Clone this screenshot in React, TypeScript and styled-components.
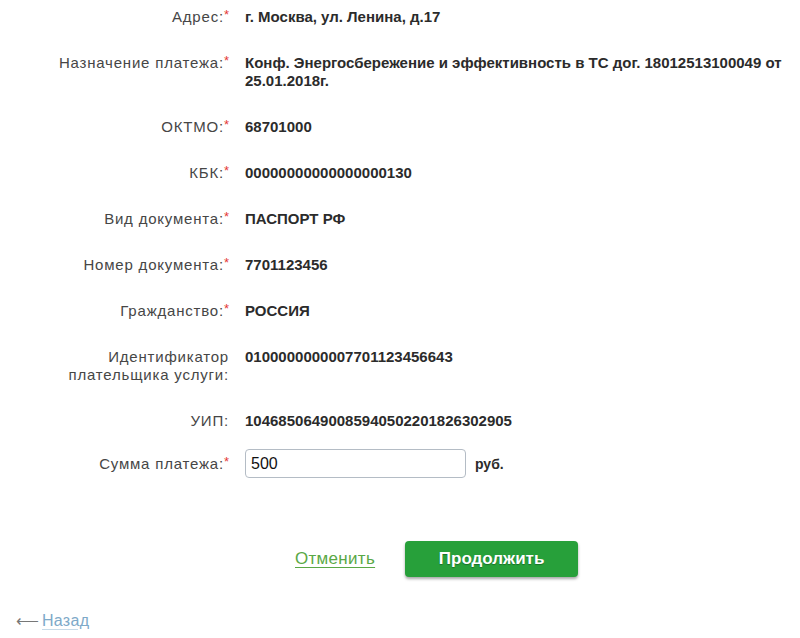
import styled, { createGlobalStyle } from "styled-components";

const GlobalStyle = createGlobalStyle`
  body {
    margin: 0;
    background: #ffffff;
    font-family: "Liberation Sans", Arial, sans-serif;
  }
`;

const Page = styled.div`
  width: 800px;
  height: 638px;
  padding-top: 8px;
  box-sizing: border-box;
`;

const Form = styled.div`
  display: flex;
  flex-direction: column;
`;

const Row = styled.div<{ $center?: boolean }>`
  display: grid;
  grid-template-columns: 229px 1fr;
  column-gap: 16px;
  align-items: ${(p) => (p.$center ? "center" : "start")};
  padding-bottom: 28px;
  margin-top: ${(p) => (p.$center ? "-9px" : "0")};
`;

const Label = styled.div`
  text-align: right;
  font-size: 15px;
  letter-spacing: 0.8px;
  line-height: 18px;
  color: #464646;
`;

const Req = styled.span`
  color: #e53935;
  vertical-align: top;
  font-size: 13px;
  line-height: 13px;
  letter-spacing: 0;
`;

const Value = styled.div`
  font-size: 15px;
  line-height: 18px;
  font-weight: bold;
  color: #2b2b2b;
`;

const AmountWrap = styled.div`
  display: flex;
  align-items: center;
  gap: 9px;
`;

const AmountInput = styled.input`
  width: 221px;
  height: 29px;
  box-sizing: border-box;
  border: 1px solid #b4bcc5;
  border-radius: 4px;
  padding: 0 5px;
  font-family: "Liberation Sans", Arial, sans-serif;
  font-size: 16px;
  color: #111;
  outline: none;
`;

const Unit = styled.span`
  font-size: 14px;
  font-weight: bold;
  color: #2b2b2b;
`;

const Actions = styled.div`
  display: flex;
  align-items: center;
  gap: 30px;
  margin-top: 35px;
  padding-left: 295px;
`;

const CancelLink = styled.a`
  font-size: 17px;
  letter-spacing: 0.3px;
  color: #5aa846;
  text-decoration: underline;
  text-underline-offset: 3px;
  cursor: pointer;
`;

const ContinueButton = styled.button`
  width: 173px;
  height: 36px;
  border: none;
  border-radius: 4px;
  background: #27a03a;
  box-shadow: 0 2px 3px rgba(0, 0, 0, 0.35);
  color: #fff;
  font-family: "Liberation Sans", Arial, sans-serif;
  font-size: 17px;
  font-weight: bold;
  text-shadow: 0 1px 1px rgba(0, 0, 0, 0.3);
  cursor: pointer;
`;

const Back = styled.div`
  display: flex;
  align-items: center;
  gap: 3px;
  margin-top: 34px;
  padding-left: 16px;
  font-size: 16px;
`;

const Arrow = styled.span`
  color: #777;
  font-size: 16px;
`;

const BackLink = styled.a`
  color: #7ea9c8;
  letter-spacing: 0.3px;
  text-decoration: underline;
  text-decoration-color: #c8dbe8;
  text-underline-offset: 3px;
  cursor: pointer;
`;

type Field = { label: string; value: string; required?: boolean };

const fields: Field[] = [
  { label: "Адрес:", value: "г. Москва, ул. Ленина, д.17", required: true },
  {
    label: "Назначение платежа:",
    value:
      "Конф. Энергосбережение и эффективность в ТС дог. 18012513100049 от 25.01.2018г.",
    required: true,
  },
  { label: "ОКТМО:", value: "68701000", required: true },
  { label: "КБК:", value: "00000000000000000130", required: true },
  { label: "Вид документа:", value: "ПАСПОРТ РФ", required: true },
  { label: "Номер документа:", value: "7701123456", required: true },
  { label: "Гражданство:", value: "РОССИЯ", required: true },
  { label: "Идентификатор плательщика услуги:", value: "0100000000007701123456643" },
  { label: "УИП:", value: "10468506490085940502201826302905" },
];

export default function App() {
  return (
    <Page>
      <GlobalStyle />
      <Form>
        {fields.map((f) => (
          <Row key={f.label}>
            <Label>
              {f.label === "Идентификатор плательщика услуги:" ? (
                <>
                  Идентификатор
                  <br />
                  плательщика услуги:
                </>
              ) : (
                f.label
              )}
              {f.required && <Req>*</Req>}
            </Label>
            <Value>{f.value}</Value>
          </Row>
        ))}
        <Row $center>
          <Label>
            Сумма платежа:<Req>*</Req>
          </Label>
          <AmountWrap>
            <AmountInput defaultValue="500" />
            <Unit>руб.</Unit>
          </AmountWrap>
        </Row>
      </Form>
      <Actions>
        <CancelLink>Отменить</CancelLink>
        <ContinueButton>Продолжить</ContinueButton>
      </Actions>
      <Back>
        <Arrow>⟵</Arrow>
        <BackLink>Назад</BackLink>
      </Back>
    </Page>
  );
}
